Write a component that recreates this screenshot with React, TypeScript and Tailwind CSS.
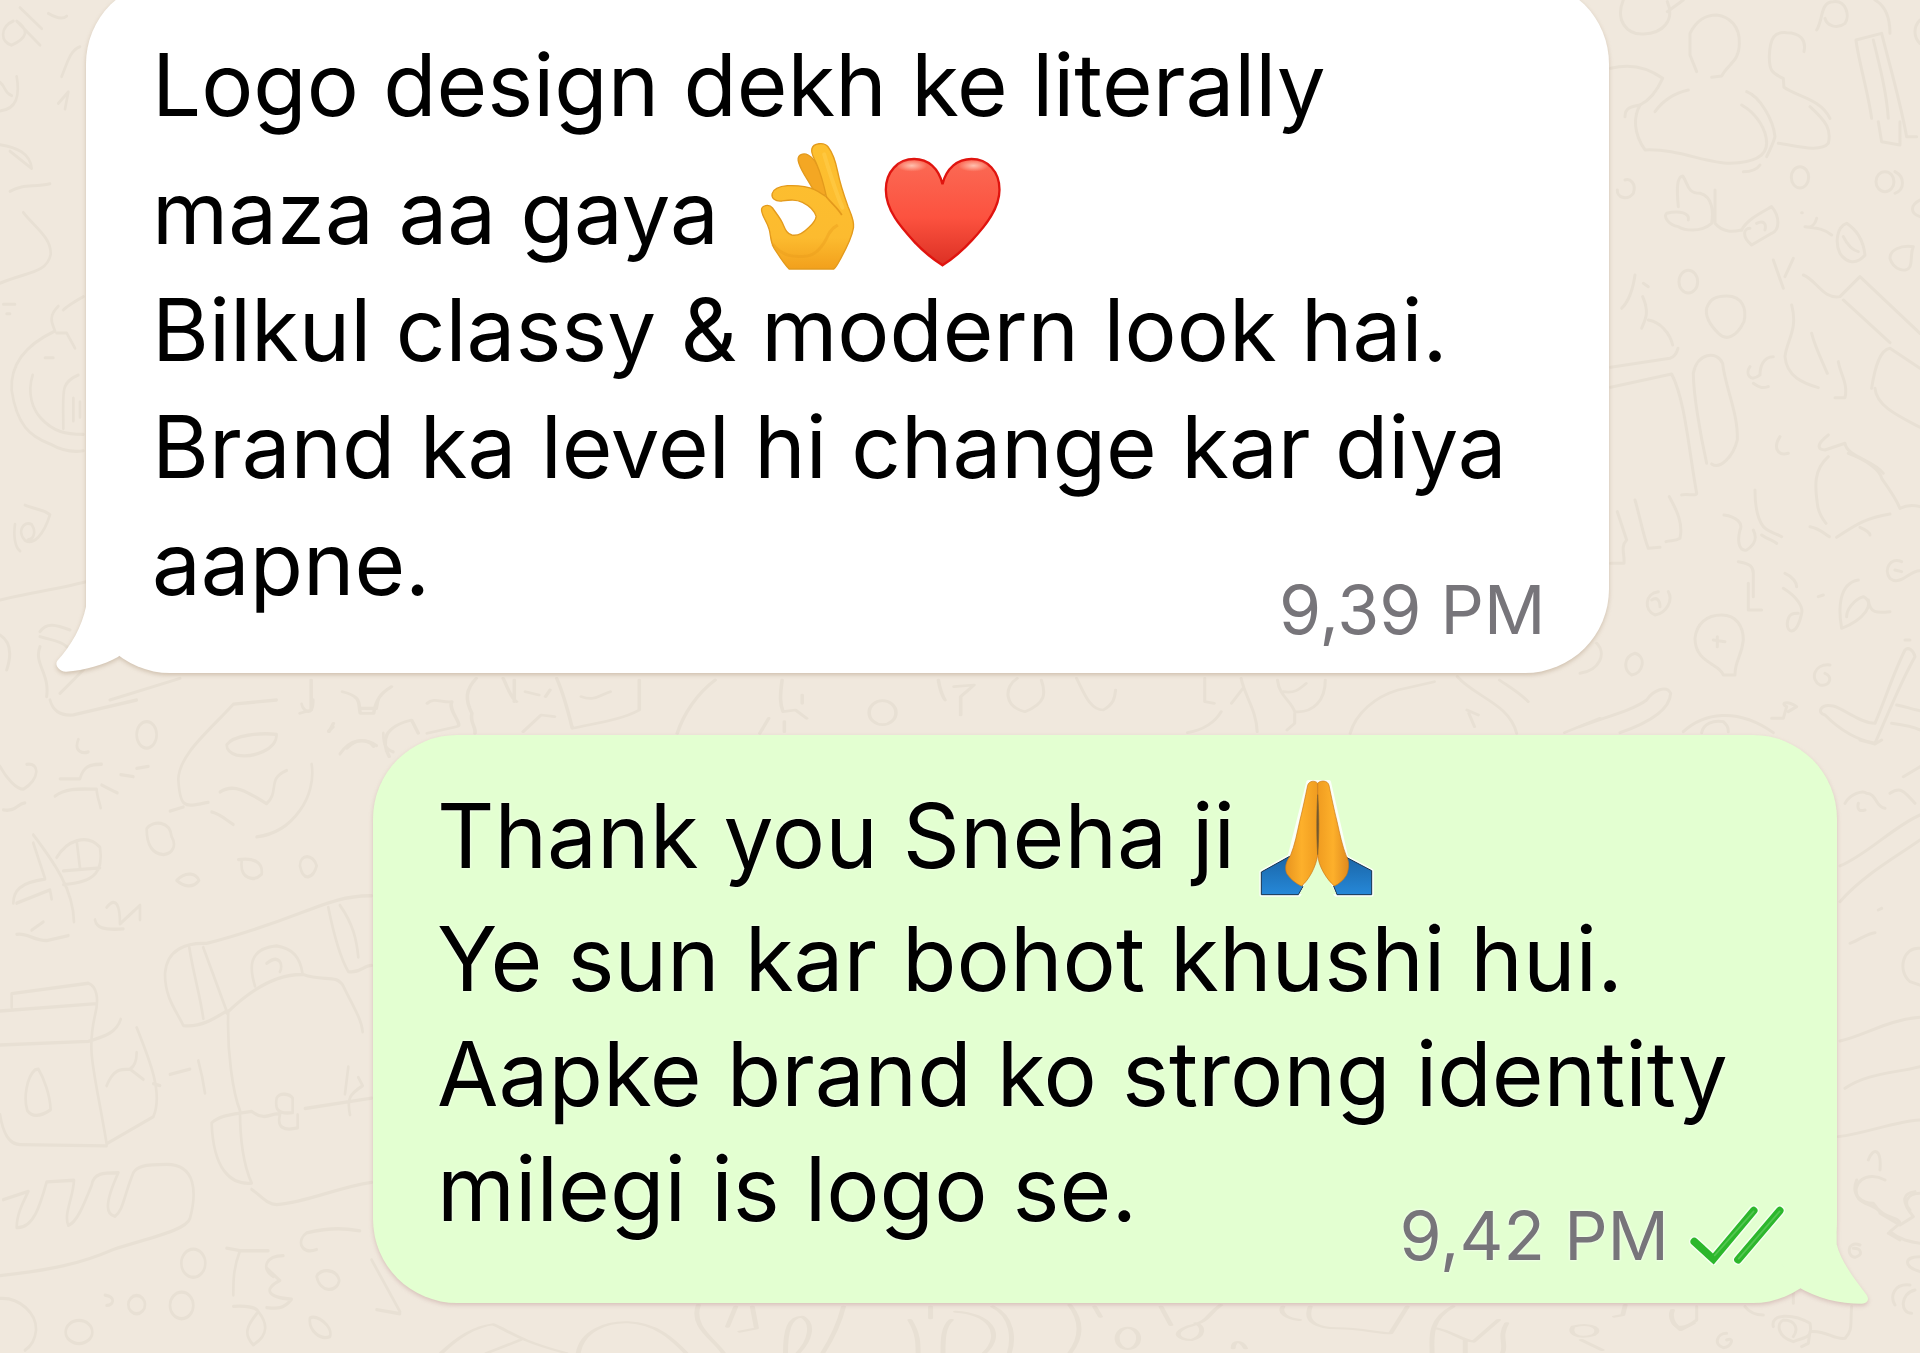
import type { ReactNode } from 'react'

function OkHand() {
  return (
    <svg role="img" aria-label="OK hand" viewBox="90 40 290 390" className="w-[97px] h-[130px] shrink-0">
      <defs>
        <linearGradient id="hand" x1="0" y1="0" x2="0" y2="1">
          <stop offset="0" stopColor="#fdc02f" />
          <stop offset="0.75" stopColor="#fcbb2f" />
          <stop offset="1" stopColor="#f2a01c" />
        </linearGradient>
      </defs>
      <g stroke="#e39a1c" strokeWidth="4" strokeLinejoin="round">
        <path
          fill="#f4a723"
          d="M207 98C205 82 222 74 237 82C250 89 262 105 270 125L300 200L262 205C250 180 240 165 228 145C218 128 209 113 207 98Z"
        />
        <path
          fill="url(#hand)"
          d="M97 247C97 233 120 228 130 241C142 258 152 270 160 286C168 304 172 318 188 322C206 326 224 314 238 300C252 288 260 275 261 266C256 250 240 234 220 224C200 214 180 217 158 220C138 222 126 212 129 198C133 183 150 176 175 174C205 173 235 176 256 186C270 192 280 200 292 208C286 180 276 140 262 108C254 90 245 78 248 64C252 46 285 42 297 58C312 78 320 105 325 130C332 165 345 205 357 238C367 262 376 280 373 300C368 330 350 365 335 392C328 405 322 418 314 424H180C165 410 150 385 135 362C122 340 126 325 120 305C114 282 99 268 97 247Z"
        />
      </g>
      <path d="M130 350C160 385 190 390 235 385C260 380 280 360 298 320C308 300 320 296 326 292" fill="none" stroke="#e99a1b" strokeWidth="9" opacity="0.4" />
      <path d="M292 208C305 225 325 240 338 262" fill="none" stroke="#d98a14" strokeWidth="5" opacity="0.7" />
      <path d="M285 80C300 130 318 190 340 240" fill="none" stroke="#ffd050" strokeWidth="12" opacity="0.5" strokeLinecap="round" />
    </svg>
  )
}

function Heart() {
  return (
    <svg role="img" aria-label="Red heart" viewBox="470 86 350 330" className="w-[117px] h-[110px] mb-1 shrink-0">
      <defs>
        <linearGradient id="heart" x1="0" y1="0" x2="0" y2="1">
          <stop offset="0" stopColor="#fb6a55" />
          <stop offset="0.55" stopColor="#fc523f" />
          <stop offset="1" stopColor="#dc3024" />
        </linearGradient>
        <radialGradient id="shine">
          <stop offset="0" stopColor="#ffc0ae" />
          <stop offset="1" stopColor="#ffc0ae" stopOpacity="0" />
        </radialGradient>
      </defs>
      <path
        d="M645 411C625 398 590 372 560 340C520 296 475 246 475 184C475 130 512 92 560 92C602 92 634 120 645 168C656 120 690 92 732 92C780 92 816 130 816 184C816 240 775 292 733 336C700 372 665 398 645 411Z"
        fill="url(#heart)"
        stroke="#e0140f"
        strokeWidth="7"
      />
      <ellipse cx="553" cy="112" rx="46" ry="18" fill="url(#shine)" />
      <ellipse cx="738" cy="112" rx="46" ry="18" fill="url(#shine)" />
    </svg>
  )
}

function FoldedHands() {
  return (
    <svg role="img" aria-label="Folded hands" viewBox="90 50 345 360" className="w-[115px] h-[120px] shrink-0">
      <defs>
        <linearGradient id="palmL" x1="0" x2="1">
          <stop offset="0" stopColor="#e8941f" />
          <stop offset="0.5" stopColor="#fdb02b" />
          <stop offset="1" stopColor="#f09c20" />
        </linearGradient>
        <linearGradient id="palmR" x1="1" x2="0">
          <stop offset="0" stopColor="#e08a1e" />
          <stop offset="0.5" stopColor="#fdb02b" />
          <stop offset="1" stopColor="#f09c20" />
        </linearGradient>
        <linearGradient id="sleeve" x1="0" y1="0" x2="0" y2="1">
          <stop offset="0" stopColor="#1a66a8" />
          <stop offset="1" stopColor="#2688d8" />
        </linearGradient>
      </defs>
      <g stroke="#fff" strokeWidth="12" strokeLinejoin="round" opacity="0.85">
        <path d="M97 332L182 285L238 62L300 62L352 288L428 328V400H320L266 300L210 400H97Z" fill="#fff" />
      </g>
      <path d="M97 332L182 285C180 320 200 350 222 376L208 400H97Z" fill="url(#sleeve)" stroke="#17324d" strokeWidth="3" />
      <path d="M428 328L352 288C358 330 340 350 314 374L324 400H428Z" fill="url(#sleeve)" stroke="#17324d" strokeWidth="3" />
      <path d="M266 292L212 398H322Z" fill="#e3ffd1" />
      <path
        d="M266 66C258 56 240 58 236 72C228 110 222 140 212 180C204 215 198 250 184 284C170 300 166 322 174 338C186 355 202 368 218 374C240 355 262 315 266 280Z"
        fill="url(#palmL)"
        stroke="#c9781a"
        strokeWidth="2"
      />
      <path
        d="M266 66C274 56 296 56 300 72C308 110 314 140 324 180C332 215 340 255 352 284C362 300 360 326 352 342C342 358 330 368 316 374C294 355 268 315 266 280Z"
        fill="url(#palmR)"
        stroke="#c9781a"
        strokeWidth="2"
      />
      <path d="M266 100C263 150 262 220 266 280C271 220 270 150 266 100Z" fill="#6b5634" stroke="#8a6428" strokeWidth="2" />
    </svg>
  )
}

function DoubleCheck() {
  return (
    <svg role="img" aria-label="Read" viewBox="88 74 288 180" className="w-24 h-[60px] shrink-0" fill="none">
      <g stroke="#f6fff0" strokeWidth="32" strokeLinecap="round">
        <path d="M104 184L161 236L282 91" />
        <path d="M235 238L360 91" />
      </g>
      <g stroke="#2cb72c" strokeWidth="23" strokeLinecap="round">
        <path d="M104 184L161 236L282 91" />
        <path d="M235 238L360 91" />
      </g>
      <g stroke="#52c650" strokeWidth="5" strokeLinecap="round">
        <path d="M165 225L282 93" />
        <path d="M237 235L360 93" />
      </g>
    </svg>
  )
}

// Hand-drawn wallpaper behind the conversation
function Wallpaper() {
  return (
    <svg
      aria-hidden="true"
      viewBox="0 0 1920 1353"
      preserveAspectRatio="xMidYMin slice"
      className="absolute inset-0 w-full h-full"
      fill="none"
      stroke="#e8e0d4"
      strokeWidth="3"
      strokeLinecap="round"
      strokeLinejoin="round"
    >
      {/* top right */}
      <g transform="translate(1580 0) scale(0.3333)" strokeWidth="9">
        <path d="M130 0C105 60 140 105 190 102C250 100 285 60 262 5M262 35L310 0" />
        <path d="M350 215L330 165V100C350 60 375 45 410 45C450 50 480 80 478 130C478 185 445 190 425 228L395 232" />
        <path d="M92 205C150 190 200 200 248 235C230 275 210 300 180 315C160 350 160 400 195 450C290 445 380 490 450 490C520 488 560 470 560 430C560 390 530 340 485 315" />
        <path d="M225 335C250 300 280 280 325 270M500 275C540 290 580 360 585 410C580 430 570 450 560 470M135 350C135 325 150 320 180 315M490 515C515 515 530 510 540 495" />
        <path d="M672 155C680 120 660 98 620 98C585 95 570 110 568 170C568 210 575 220 610 235L612 262C650 290 720 295 750 355M690 320C740 365 755 390 745 430C720 460 640 435 595 430" />
        <path d="M710 90C730 60 720 5 760 5C800 0 810 50 795 70C770 90 740 75 735 55M885 0C920 20 930 60 930 100" />
        <path d="M875 355C865 280 835 180 828 120L905 100C930 200 960 300 980 410H1010M880 120C900 200 920 280 925 355M895 365L905 425L960 435V365M1020 60C1000 80 1000 110 1020 130" />
        <ellipse cx="660" cy="532" rx="26" ry="32" />
        <path d="M112 570C110 590 140 605 160 580C170 550 150 535 135 540M295 620C290 570 290 530 308 528C325 550 320 580 360 580C400 590 400 640 395 670C360 700 310 690 295 680C265 675 250 650 260 640C300 630 330 640 325 660M405 570V670C430 700 460 695 485 690" />
        <path d="M485 690C500 660 540 640 575 620C600 650 600 690 575 700L515 735C485 710 490 685 510 685M530 670C550 660 560 670 555 690M665 638H667M710 655C700 690 680 680 675 680C710 685 730 685 755 705" />
        <path d="M800 670C770 680 765 730 780 760C800 790 830 795 855 765C850 720 830 690 800 670ZM790 710C800 730 815 750 835 755" />
        <ellipse cx="915" cy="545" rx="27" ry="30" />
        <path d="M945 515C975 530 975 570 945 580M1020 600C990 615 990 640 1020 650M1000 740C960 735 930 750 930 775C940 810 980 820 990 800C998 780 990 765 1000 740Z" />
        <ellipse cx="325" cy="845" rx="28" ry="34" />
        <path d="M440 888C490 888 500 930 492 965C470 1010 440 1025 415 1000C390 975 375 950 380 925C390 895 410 888 440 888Z" />
        <path d="M125 925C150 900 160 860 165 825M205 860L190 850M188 890C210 940 195 960 185 985M205 960C240 965 270 1000 278 1035M92 1102L270 1075C285 1070 290 1060 294 1045M92 1162L275 1122C315 1200 325 1340 350 1480C350 1490 320 1480 305 1485" />
        <path d="M380 1390C360 1300 340 1180 340 1120C350 1060 410 1050 428 1090C435 1160 475 1240 472 1320C460 1370 420 1410 395 1392" />
        <path d="M580 780L610 865M640 775L615 830M670 825C710 840 730 900 780 890L840 830L1020 1000M790 900L930 1028M635 915C655 990 620 1020 615 1070C620 1130 670 1150 715 1163M695 1000C705 1040 725 1080 742 1120M775 1085C780 1120 805 1150 795 1193H765" />
        <path d="M580 1070C550 1070 540 1100 540 1125C510 1150 495 1120 510 1100M520 1150C540 1165 550 1165 565 1160M1020 1105L930 1045C900 1050 885 1100 875 1165M885 1165C890 1220 960 1250 1020 1282M600 1310C580 1340 590 1370 625 1360M745 1305C700 1340 720 1350 735 1350L795 1330C800 1370 880 1380 910 1420" />
      </g>
      {/* middle right */}
      <g transform="translate(1580 440) scale(0.3333)" strokeWidth="9">
        <path d="M165 180C180 230 190 290 205 325L240 322M268 170C290 210 310 250 300 295C285 305 270 300 258 305M112 215L140 300C120 320 135 345 132 370H92" />
        <path d="M432 225C470 230 490 250 480 270C470 310 480 335 500 330C530 310 530 290 520 270M525 150C525 200 535 240 550 260C570 280 590 280 605 290M545 285C565 300 580 300 590 310" />
        <path d="M745 50C700 90 705 140 712 190C715 220 730 240 738 250M805 40C860 60 900 90 905 115C930 150 950 180 960 205M690 260C720 265 730 280 748 290M770 292C820 260 850 235 930 222M840 262C860 270 870 280 870 285M960 205C980 195 1000 195 1020 200" />
        <path d="M475 365C510 370 520 380 520 400V470M505 430V510H545M615 400C640 410 650 430 650 440M610 445C650 470 670 500 665 520C650 590 620 580 622 550C625 520 640 520 655 520M715 470L730 465" />
        <path d="M785 565C775 510 775 430 835 420M785 565C850 540 890 490 850 470C820 480 800 510 800 530M865 480C870 520 890 520 930 515M965 365C930 350 910 390 930 415C960 440 990 390 1020 392M945 390L965 395" />
        <path d="M235 455C195 460 190 510 225 525C260 520 280 480 265 455M215 480C230 470 240 480 240 500" />
        <path d="M425 525C470 525 490 560 490 600C485 650 465 660 465 705H430C420 670 345 670 345 595C350 550 380 525 425 525ZM400 600L435 605M412 590V620" />
        <path d="M50 610C80 640 60 690 0 700M165 640C130 650 130 690 155 705C190 700 200 650 165 640ZM750 675C700 670 690 720 720 735C750 740 760 710 735 700" />
        <path d="M0 860C80 830 160 810 200 780C220 750 260 735 272 760C270 800 230 840 120 878M310 875C370 820 470 800 580 878M365 878C370 850 400 840 430 845C440 855 445 860 445 875M575 835H610L620 800C600 790 620 780 650 800L625 815" />
        <path d="M975 630C940 700 915 780 885 850C840 850 790 805 760 798C720 790 710 820 735 825C780 870 830 900 885 910C925 820 960 730 1005 650C1000 630 985 620 975 630ZM950 795C980 800 1000 810 1020 812M935 850C970 855 1000 860 1020 870M975 600H990" />
      </g>
      {/* lower right */}
      <g transform="translate(1800 740) scale(0.3333)" strokeWidth="9">
        <path d="M180 0L225 12L245 0M135 190C150 160 190 150 200 160C230 160 225 200 255 205M175 190C170 210 180 215 195 210M270 160C300 140 310 150 345 190M310 110L360 80" />
        <path d="M120 378C200 345 280 260 360 225M120 485C190 405 290 350 360 300M235 510L245 505M150 610C180 600 200 580 225 578M360 625C310 620 290 690 330 725L360 735" />
        <path d="M120 903C200 885 260 840 360 832M135 1045C200 1000 280 1000 360 980M115 1190C200 1180 280 1145 360 1140M205 1260C220 1220 245 1225 240 1290M255 1320C200 1290 150 1330 175 1375C190 1395 240 1400 240 1420L300 1455L340 1430C300 1380 310 1360 345 1355M265 1480L300 1500" />
      </g>
      {/* bottom right corner */}
      <g transform="translate(1660 1180) scale(0.3333)" strokeWidth="9">
        <path d="M590 0C570 50 610 70 640 70C670 120 720 110 720 130L690 155C720 180 750 185 780 190M780 40C740 40 730 70 750 90M600 195C560 180 560 230 585 232C610 225 605 205 580 205M780 230C730 230 730 260 780 275" />
        <path d="M750 315C700 310 690 350 705 375M765 330C720 340 720 400 755 400M35 400C30 440 60 460 110 420V380M255 380C270 400 290 405 310 405M200 460C170 460 160 495 190 503C215 500 225 470 200 480" />
        <path d="M400 330V370M340 440C330 400 400 400 450 430C460 480 430 470 400 485C350 470 350 430 370 420C410 420 415 450 400 470M425 500L445 490L450 455C500 450 520 480 555 475C580 450 570 430 575 380" />
      </g>
      {/* top left */}
      <g transform="scale(0.3333 0.3827)" strokeWidth="8">
        <path d="M60 20L125 75M40 55C0 70 0 110 35 118C80 100 90 80 50 55L120 118M145 35C170 48 190 50 200 42M240 122C210 130 200 170 185 200M175 270L205 240L195 285M50 200C60 250 50 285 0 290M0 215C20 230 10 240 35 250" />
        <path d="M0 378C50 385 90 400 95 440L30 395M30 500C70 480 100 490 150 480M70 555C100 590 155 620 152 665C140 715 80 710 0 740M10 795H45M20 820H30" />
        <path d="M250 775C220 790 200 800 190 810M175 800C140 830 160 850 165 865C80 900 30 950 35 1020C50 1110 90 1140 150 1160C190 1180 220 1182 250 1178M98 980C80 1030 100 1070 120 1090C160 1130 200 1135 250 1135M235 980C180 1000 190 1020 190 1120M135 935H160M170 870H200L225 910M220 1040V1100M240 1050V1090" />
        <path d="M75 1320C100 1330 130 1330 150 1345C130 1400 100 1425 75 1412C50 1390 70 1360 95 1370C110 1390 100 1410 85 1410M45 1370C40 1400 45 1430 60 1440M0 1568C80 1550 170 1540 258 1520" />
      </g>
      {/* tail side */}
      <g transform="translate(0 560) scale(0.3333)" strokeWidth="9">
        <path d="M120 215C140 185 170 195 210 210M120 230C150 240 180 240 200 260M120 260C100 310 150 340 140 410M180 400L250 330M330 420L540 355M0 225C40 250 30 300 20 330" />
      </g>
      {/* between the bubbles */}
      <g transform="translate(300 660) scale(0.4464 0.3333)" strokeWidth="8">
        <path d="M25 60V150L0 160M95 95C140 110 130 130 135 160H165C170 120 180 100 205 80M105 265C130 230 155 240 165 260M75 190L65 215M200 290C180 240 190 200 250 180L265 220M285 130C300 110 320 130 340 125C330 150 370 200 350 200L285 220M395 55C370 90 370 120 385 160C380 190 395 200 392 220" />
        <path d="M480 60V125M455 55C465 80 470 110 485 125M505 95L535 105M560 90L550 110M575 55C590 100 600 150 610 205C660 190 720 180 760 150V60M630 110C660 125 670 105 695 95M500 215L540 165L570 170M845 220C860 160 890 100 930 60M1080 60C1075 110 1075 130 1082 155L1110 150L1135 175M1125 105V130M1030 220L1050 175M1085 185V215" />
        <ellipse cx="1305" cy="158" rx="30" ry="36" />
        <path d="M1430 60C1435 100 1440 110 1445 120M1465 80L1510 75L1480 110V165" />
      </g>
      <g transform="translate(1000 660) scale(0.3827 0.3333)" strokeWidth="8">
        <path d="M45 55C10 80 10 140 65 155C120 130 120 100 108 60M200 55C220 100 235 150 270 150C300 130 300 110 302 90M535 55V125L560 130M630 55C640 110 670 150 672 215M605 130L635 85M490 218C530 210 560 190 578 155M725 60C730 110 760 120 770 155C820 160 850 120 850 60M740 95C770 100 780 90 800 70M770 160V190L750 210" />
        <path d="M915 220C930 160 980 110 1040 90L1135 65M1195 50C1240 110 1330 130 1350 220M1305 60C1330 80 1360 100 1380 125M1220 150L1250 165M1225 160L1240 200M1475 218L1568 175" />
      </g>
      {/* lower left */}
      <g transform="translate(0 700) scale(0.3333 0.4147)" strokeWidth="8">
        <path d="M150 0C160 30 190 38 220 36L410 0M700 10C620 80 540 130 535 190C540 270 560 255 625 247M510 268L550 258M700 10L830 0" />
        <ellipse cx="440" cy="84" rx="30" ry="32" />
        <path d="M680 108C700 85 780 78 830 83C830 120 760 140 710 133C690 128 680 120 680 108ZM660 222C700 200 740 220 800 250C840 220 800 190 860 170M935 155C950 230 880 320 770 330M635 270C660 275 680 290 700 300M235 95C220 125 250 130 265 125M0 160C20 190 50 215 70 215C120 190 120 150 80 155M10 265C50 270 50 250 75 248" />
        <path d="M180 190H240C250 160 270 155 305 155M165 232C200 210 250 215 290 215C290 230 300 250 302 260M305 205C330 215 340 220 352 224M362 180L400 185M410 165L445 160M905 10C910 30 940 40 940 0M1080 20H1130L1135 0M1020 130C1050 95 1090 90 1130 110M1150 80C1150 110 1160 120 1180 125M985 75L1000 65" />
        <path d="M100 325C150 380 220 450 222 535M100 345L135 430M40 490C40 460 60 440 135 432M50 490L150 458L155 480M170 380C200 340 260 320 300 355C310 410 290 440 190 445M190 412L300 405M230 340L240 405M50 565C80 560 100 580 140 580L205 568M95 555L130 535M285 530C290 550 310 555 370 552M320 500C350 470 360 500 360 540L420 495L420 530" />
        <path d="M440 310C460 290 510 290 515 330C530 350 520 370 490 373C450 370 440 340 440 310ZM530 435C560 410 590 420 597 435C580 455 550 450 530 435ZM715 385C760 380 790 390 785 420C760 440 720 430 725 390M900 400C900 370 940 370 950 400C940 430 910 440 900 400Z" />
        <path d="M1115 472C980 470 900 530 620 587C560 585 500 600 495 660C495 720 530 750 550 785C600 790 640 770 680 750L610 597M568 597C580 660 600 710 610 768M985 500C1000 560 1020 620 1045 655C1080 660 1090 640 1115 640M1020 495C1060 540 1070 580 1075 620" />
        <path d="M765 690C750 650 740 600 830 593C880 600 900 620 908 660M800 635C840 610 850 640 840 655M680 755C750 700 830 660 910 662C970 680 1010 660 1030 690C1060 740 1085 770 1088 800M685 750C680 850 700 950 720 990C720 1060 730 1120 755 1165C690 1170 640 1130 635 1020C660 1000 700 1000 755 992C800 1020 820 990 840 1000M915 985L1115 960M755 1180C790 1200 800 1215 830 1217C930 1210 1010 1175 1115 1163M830 960C840 945 870 950 878 960V995C830 1000 825 985 830 960ZM840 1000C830 1030 850 1040 893 1032V1000M1045 885L1035 950M1075 910L1088 930C1050 950 1040 960 1050 1000" />
        <path d="M35 740V708L265 683C290 690 298 720 285 760C260 850 280 880 320 1070L460 1005C490 950 450 870 410 790M0 750L290 732M0 832L265 823C320 810 350 800 362 770M0 1000C10 1050 30 1072 60 1072L320 1075M105 892C80 910 70 960 82 990C100 1010 130 1000 152 988C150 950 130 910 115 890ZM320 930C340 890 360 890 390 890C410 880 410 860 410 850M390 890L430 915M510 903L570 890M595 870C605 900 610 920 615 948M460 925L480 930" />
        <path d="M0 1388C150 1375 240 1360 340 1325C430 1300 560 1280 570 1250C590 1190 590 1120 500 1120C430 1120 410 1125 400 1140C370 1200 370 1230 345 1245C320 1240 310 1220 355 1140C310 1140 280 1140 275 1170C250 1220 230 1260 205 1267C190 1240 220 1200 222 1158L140 1162C120 1220 100 1275 50 1272C50 1240 70 1210 85 1185L10 1205" />
        <path d="M0 1443C60 1440 110 1480 108 1520C105 1545 90 1560 75 1568M315 1435C350 1440 340 1460 320 1460" />
        <ellipse cx="580" cy="1358" rx="36" ry="34" />
        <ellipse cx="545" cy="1460" rx="35" ry="32" />
        <ellipse cx="410" cy="1458" rx="25" ry="22" />
        <ellipse cx="237" cy="1524" rx="40" ry="28" />
        <path d="M680 1322L720 1328C700 1370 700 1400 700 1435M720 1328H805M850 1340C800 1340 780 1370 820 1390M800 1370L840 1400C790 1420 800 1440 875 1445C850 1470 830 1468 800 1465M700 1462C740 1460 770 1465 775 1475C800 1500 810 1530 760 1555C730 1530 740 1510 770 1480M950 1325C900 1340 890 1300 920 1285C1000 1270 1040 1275 1080 1280M950 1390C960 1370 1010 1370 1018 1400C1010 1430 960 1430 950 1390ZM930 1490C950 1480 1000 1510 990 1535C960 1545 925 1520 930 1490ZM1115 1350L1200 1475M1130 1470L1200 1480" />
      </g>
      {/* bottom edge */}
      <g transform="translate(400 1290) scale(0.829 0.3333)" strokeWidth="6">
        <path d="M50 189C70 140 90 110 112 103C130 120 140 150 200 189M105 189L145 150M215 189C220 120 250 95 275 97C310 100 330 150 345 189M360 45C350 110 380 150 390 189M405 50L395 110M425 50L430 115L410 125M465 189C465 120 470 80 485 80C500 100 495 150 480 189M535 50C530 100 520 150 510 189M615 90C625 130 625 160 625 189M640 50V85M670 65C710 70 730 130 705 189M665 90C655 110 655 150 655 189M715 50C740 80 740 150 735 189M808 45C825 100 820 150 808 189M838 50L845 80" />
        <ellipse cx="878" cy="145" rx="13" ry="32" />
        <path d="M918 50L930 105M990 45C970 80 980 90 950 110C930 130 940 150 955 150C970 140 970 110 960 100M1005 175C1005 150 1015 150 1020 175M1065 50C1060 70 1070 85 1085 90M1098 50C1090 100 1110 115 1130 115C1160 115 1180 130 1195 130L1215 50M1270 50C1240 90 1245 150 1245 189M1250 115C1270 125 1280 150 1295 155L1325 90M1335 100C1325 140 1335 160 1330 189M1285 150V189M1415 110C1440 95 1450 120 1440 135C1420 150 1410 130 1415 110ZM1425 150L1450 180M1478 45L1475 75L1465 80M1535 60C1530 90 1540 110 1545 120L1560 100" />
      </g>
    </svg>
  )
}

interface LineProps {
  children: ReactNode
}

function TallLine({ children }: LineProps) {
  return <div className="flex items-end h-32">{children}</div>
}

export default function App() {
  return (
    <div className="relative min-h-screen overflow-hidden bg-[#f0e8dd] font-['Inter',sans-serif] text-black">
      <Wallpaper />
      <main className="relative flex flex-col gap-[62px] -mt-5 pl-[86px] pr-[83px]">
        <article className="relative self-start w-[87%] rounded-[84px] bg-white pt-[46px] pb-6 pl-[66px] pr-16 drop-shadow-[0_2px_2px_rgba(150,120,90,0.35)]">
          <svg aria-hidden="true" viewBox="0 0 720 420" className="absolute -left-[46px] -bottom-[27px] w-60 h-[140px]">
            <path d="M138 60V140C125 200 95 255 52 302C42 316 60 335 78 335C135 330 190 315 235 290L320 180Z" fill="#fff" />
          </svg>
          <div className="relative text-[87px] leading-[117px] whitespace-nowrap">
            <div>Logo design dekh ke literally</div>
            <TallLine>
              <span>maza aa gaya</span>
              <span className="flex items-end gap-7 pl-10">
                <OkHand />
                <Heart />
              </span>
            </TallLine>
            <div>Bilkul classy &amp; modern look hai.</div>
            <div>Brand ka level hi change kar diya</div>
            <div className="flex justify-between">
              <span>aapne.</span>
              <time className="mt-16 text-[68px] leading-[80px] text-[#77757a]">9,39 PM</time>
            </div>
          </div>
        </article>

        <article className="relative ml-[287px] rounded-[84px] bg-[#e3ffd1] pt-[43px] pb-7 pl-16 pr-[52px] drop-shadow-[0_2px_2px_rgba(170,120,120,0.35)]">
          <svg aria-hidden="true" viewBox="0 0 780 519" className="absolute -right-[83px] -bottom-[51px] w-[260px] h-[173px]">
            <path d="M530 90V190C542 240 580 290 620 342C630 358 620 368 605 368C540 368 470 352 413 317L330 200Z" fill="#e3ffd1" />
          </svg>
          <div className="relative text-[89px] leading-[115px] whitespace-nowrap [text-shadow:0_0_3px_#fff]">
            <div className="flex items-start h-[123px]">
              <span>Thank you Sneha ji</span>
              <span className="pl-6">
                <FoldedHands />
              </span>
            </div>
            <div>Ye sun kar bohot khushi hui.</div>
            <div>Aapke brand ko strong identity</div>
            <div className="flex justify-between">
              <span>milegi is logo se.</span>
              <span className="flex items-center gap-5 mt-16 h-20">
                <time className="text-[68px] leading-[80px] text-[#77757a]">9,42 PM</time>
                <DoubleCheck />
              </span>
            </div>
          </div>
        </article>
      </main>
    </div>
  )
}
